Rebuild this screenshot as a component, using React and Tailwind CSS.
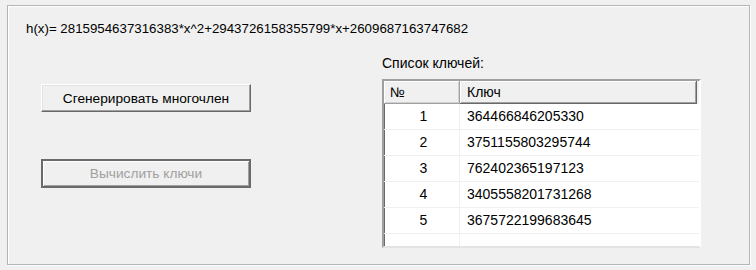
const keys = [
  { n: 1, key: "364466846205330" },
  { n: 2, key: "3751155803295744" },
  { n: 3, key: "762402365197123" },
  { n: 4, key: "3405558201731268" },
  { n: 5, key: "3675722199683645" },
];

const App = () => {
  return (
    <div className="w-[756px] h-[270px] bg-[#f0f0f0] pt-[5px] pl-[7px] font-['Liberation_Sans',Arial,sans-serif] text-[14px] leading-[15px] text-black">
      <div className="w-[743px] h-[260px] border border-[#b4b4b4] shadow-[inset_1px_1px_0_#ffffff,1px_1px_0_#ffffff] pl-[18px] pt-[15px]">
        <p className="text-[13.3px]">h(x)= 2815954637316383*x^2+2943726158355799*x+2609687163747682</p>

        <div className="flex mt-[20px]">
          <div className="ml-[15px] w-[210px] flex flex-col pt-[28px] gap-[47px] text-[13.7px]">
            <button className="h-[28px] w-full bg-[#f0f0f0] border border-t-white border-l-white border-r-[#696969] border-b-[#696969] shadow-[inset_-1px_-1px_0_#a0a0a0,inset_1px_1px_0_#e3e3e3]">
              Сгенерировать многочлен
            </button>
            <button
              disabled
              className="h-[29px] w-full bg-[#f0f0f0] border-2 border-[#6a6a6a] text-[#a0a0a0] shadow-[inset_1px_1px_0_#ffffff,inset_-1px_-1px_0_#a0a0a0]">
              Вычислить ключи
            </button>
          </div>

          <div className="ml-[131px] flex flex-col">
            <p>Список ключей:</p>
            <div className="mt-[8px] w-[319px] h-[169px] bg-white border-2 border-t-[#a0a0a0] border-l-[#a0a0a0] border-r-white border-b-[#e3e3e3] shadow-[inset_1px_1px_0_#696969] flex flex-col">
              <div className="flex h-[23px] bg-[#f0f0f0] shrink-0">
                <div className="w-[76px] pl-[6px] flex items-center border-r border-b border-r-[#a0a0a0] border-b-[#a0a0a0] shadow-[inset_1px_1px_0_#ffffff,inset_-1px_-1px_0_#d0d0d0]">
                  №
                </div>
                <div className="w-[237px] pl-[7px] flex items-center border-r border-b border-r-[#696969] border-b-[#696969] shadow-[inset_1px_1px_0_#ffffff,inset_-1px_-1px_0_#a0a0a0]">
                  Ключ
                </div>
              </div>
              <div className="flex-1 flex flex-col">
                {keys.map((row) => (
                  <div key={row.n} className="flex h-[26px] border-b border-[#f0f0f0]">
                    <div className="w-[76px] flex items-center justify-center pl-[4px] border-r border-[#f0f0f0]">
                      {row.n}
                    </div>
                    <div className="pl-[7px] flex items-center">{row.key}</div>
                  </div>
                ))}
                <div className="flex flex-1">
                  <div className="w-[76px] border-r border-[#f0f0f0]"></div>
                </div>
              </div>
            </div>
          </div>
        </div>
      </div>
    </div>
  );
};

export default App;
